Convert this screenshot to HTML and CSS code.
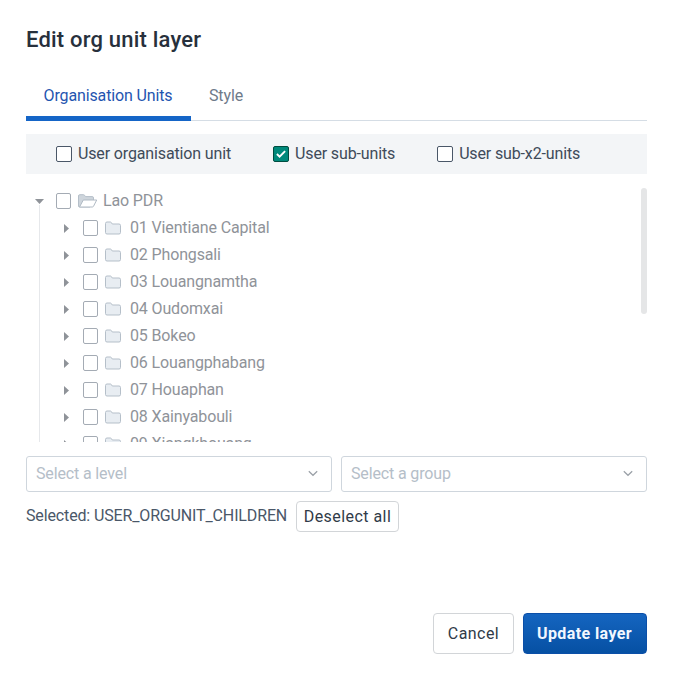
FILE: index.html
```html
<!DOCTYPE html>
<html lang="en">
<head>
<meta charset="utf-8">
<title>Edit org unit layer</title>
<link rel="stylesheet" href="styles.css">
</head>
<body>
<svg width="0" height="0" class="defs" aria-hidden="true">
  <symbol id="folder" viewBox="0 0 16 14"><path d="M.5 11.500v-9a1.500 1.500 0 0 1 1.500-1.500h3.300c.5 0 .8.2 1.100.6l.9 1.400h6.700a1.500 1.500 0 0 1 1.500 1.500v7a1.500 1.500 0 0 1-1.500 1.500H2a1.500 1.500 0 0 1-1.500-1.500z" fill="#e8edf2" stroke="#b5bfc9"/></symbol>
  <symbol id="right" viewBox="0 0 5 9"><path d="M0 0l5 4.500L0 9z" fill="#8f9399"/></symbol>
  <symbol id="chevron" viewBox="0 0 10 7"><path d="M.8 1.200L5 5.300l4.200-4.100" fill="none" stroke="#9aa0a7" stroke-width="1.200"/></symbol>
</svg>
<main class="dialog">
  <h1>Edit org unit layer</h1>
  <nav class="tabs">
    <button class="tab active">Organisation Units</button>
    <button class="tab">Style</button>
  </nav>
  <section class="options">
    <label class="option"><span class="box"></span>User organisation unit</label>
    <label class="option"><span class="box checked"><svg width="10" height="8" viewBox="0 0 10 8"><path d="M.9 4l2.700 2.600L9.100 1.100" fill="none" stroke="#fff" stroke-width="1.900"/></svg></span>User sub-units</label>
    <label class="option"><span class="box"></span>User sub-x2-units</label>
  </section>
  <section class="tree">
    <div class="nodes">
      <div class="root">
        <svg class="down" width="9" height="5" viewBox="0 0 9 5"><path d="M0 0h9L4.500 5z" fill="#8f9399"/></svg>
        <span class="box"></span>
        <svg class="open" width="20" height="14" viewBox="0 0 20 14"><path d="M.5 12.500V2A1.300 1.300 0 0 1 1.800.7h3.700c.5 0 .8.2 1.100.6L7.500 2.600h6.700a1.300 1.300 0 0 1 1.300 1.300V6L12 13H1z" fill="#ced5dc" stroke="#b5bfc9"/><path d="M5.300 6h13.400l-3.200 6.300a1.200 1.200 0 0 1-1.100.7H1.500z" fill="#fff" stroke="#b0bac4" stroke-linejoin="round"/></svg>
        <span>Lao PDR</span>
      </div>
      <div class="children">
        <div class="node"><svg class="arrow"><use href="#right"/></svg><span class="box"></span><svg class="folder"><use href="#folder"/></svg><span>01 Vientiane Capital</span></div>
        <div class="node"><svg class="arrow"><use href="#right"/></svg><span class="box"></span><svg class="folder"><use href="#folder"/></svg><span>02 Phongsali</span></div>
        <div class="node"><svg class="arrow"><use href="#right"/></svg><span class="box"></span><svg class="folder"><use href="#folder"/></svg><span>03 Louangnamtha</span></div>
        <div class="node"><svg class="arrow"><use href="#right"/></svg><span class="box"></span><svg class="folder"><use href="#folder"/></svg><span>04 Oudomxai</span></div>
        <div class="node"><svg class="arrow"><use href="#right"/></svg><span class="box"></span><svg class="folder"><use href="#folder"/></svg><span>05 Bokeo</span></div>
        <div class="node"><svg class="arrow"><use href="#right"/></svg><span class="box"></span><svg class="folder"><use href="#folder"/></svg><span>06 Louangphabang</span></div>
        <div class="node"><svg class="arrow"><use href="#right"/></svg><span class="box"></span><svg class="folder"><use href="#folder"/></svg><span>07 Houaphan</span></div>
        <div class="node"><svg class="arrow"><use href="#right"/></svg><span class="box"></span><svg class="folder"><use href="#folder"/></svg><span>08 Xainyabouli</span></div>
        <div class="node"><svg class="arrow"><use href="#right"/></svg><span class="box"></span><svg class="folder"><use href="#folder"/></svg><span>09 Xiangkhouang</span></div>
      </div>
    </div>
    <div class="scrollbar"></div>
  </section>
  <section class="selects">
    <div class="select"><span>Select a level</span><svg width="10" height="7"><use href="#chevron"/></svg></div>
    <div class="select"><span>Select a group</span><svg width="10" height="7"><use href="#chevron"/></svg></div>
  </section>
  <section class="summary">
    <span class="selected">Selected: USER_ORGUNIT_CHILDREN</span>
    <button class="btn small">Deselect all</button>
  </section>
  <footer class="actions">
    <button class="btn cancel">Cancel</button>
    <button class="btn primary">Update layer</button>
  </footer>
</main>
</body>
</html>
```
FILE: styles.css
```css
* { box-sizing: border-box; }
body { margin: 0; background: #fff; color: #404b5a; font: 16px/20px Roboto, sans-serif; letter-spacing: -.14px; }
button { font: inherit; letter-spacing: inherit; margin: 0; }
svg { display: block; flex: none; }
.defs { position: absolute; }
.dialog { height: 678px; padding: 26px 26px 24px; display: flex; flex-direction: column; overflow: hidden; }
h1 { margin: 0; height: 45px; font-size: 22px; line-height: 27px; font-weight: 500; letter-spacing: .2px; color: #27303c; }
.tabs { display: flex; height: 50px; box-shadow: inset 0 -1px #d5dde5; }
.tab { border: 0; background: none; padding: 0 18px 1px; color: #6e7a8a; }
.tab.active { width: 165px; padding: 0 1px 0 0; color: #1f55b0; border-bottom: 5px solid #1565c7; border-top: 4px solid transparent; }
.options { display: flex; gap: 42px; align-items: center; height: 40px; margin-top: 13px; padding-left: 30px; background: #f3f5f7; }
.option { display: flex; align-items: center; gap: 6px; }
.box { flex: none; width: 16px; height: 16px; border: 1px solid #4a5768; border-radius: 2px; background: #fff; display: flex; align-items: center; justify-content: center; }
.box.checked { background: #00897b; border: 1px solid #004d40; }
.tree { display: flex; justify-content: space-between; height: 254px; margin-top: 14px; overflow: hidden; color: #8f9399; }
.nodes { padding-left: 9px; }
.nodes .box { width: 15px; border-color: #a4abb4; }
.root { display: flex; align-items: center; height: 26px; }
.root .down { margin-right: 12px; }
.root .open { margin: 0 5px 0 7px; }
.children { margin: -9px 0 0 4px; padding: 9px 0 0 24px; border-left: 1px solid #e6e8eb; }
.node { display: flex; align-items: center; height: 27px; }
.arrow { width: 5px; height: 9px; margin: 1px 14px 0 0; }
.folder { width: 16px; height: 14px; margin: 0 9px 0 7px; }
.scrollbar { width: 6px; height: 126px; border-radius: 3px; background: #e5e6e7; }
.selects { display: flex; gap: 9px; margin-top: 14px; }
.select { flex: 1; height: 36px; padding: 0 13px 1px 9px; display: flex; align-items: center; justify-content: space-between; border: 1px solid #cfd6dd; border-radius: 3px; color: #b5bec8; }
.summary { display: flex; gap: 9px; margin-top: 9px; align-items: center; color: #4a5768; }
.selected { width: 261px; padding-bottom: 2px; white-space: nowrap; }
.btn { border: 1px solid #d2d5d8; border-radius: 4px; background: #fff; color: #303b48; letter-spacing: .45px; padding: 0; }
.small { width: 103px; height: 31px; }
.actions { display: flex; justify-content: flex-end; gap: 9px; margin-top: auto; }
.cancel { width: 81px; height: 41px; }
.primary { width: 124px; height: 41px; padding-right: 1px; color: #f2f7ff; font-weight: 700; letter-spacing: .4px; border-color: #0b4fa8; background: linear-gradient(#1565c0, #0650a3); }
```
